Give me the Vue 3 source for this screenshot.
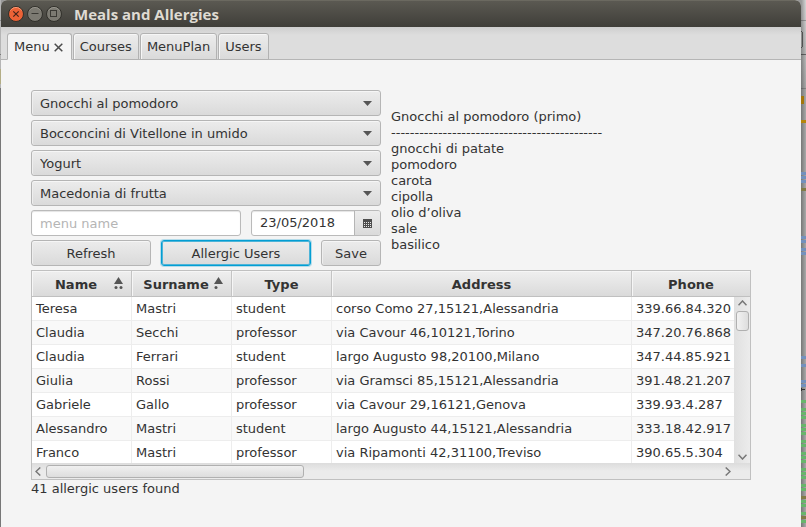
<script setup>
import { ref } from 'vue'

const tabs = ['Menu', 'Courses', 'MenuPlan', 'Users']
const activeTab = ref('Menu')

const courses = [
  { label: 'First course', value: 'Gnocchi al pomodoro' },
  { label: 'Main course', value: 'Bocconcini di Vitellone in umido' },
  { label: 'Dessert', value: 'Yogurt' },
  { label: 'Fruit', value: 'Macedonia di frutta' },
]

const menuName = ref('')
const menuDate = ref('23/05/2018')

const details = [
  'Gnocchi al pomodoro (primo)',
  '---------------------------------------------',
  'gnocchi di patate',
  'pomodoro',
  'carota',
  'cipolla',
  'olio d’oliva',
  'sale',
  'basilico',
]

const columns = [
  { key: 'name', title: 'Name', dots: 2 },
  { key: 'surname', title: 'Surname', dots: 1 },
  { key: 'type', title: 'Type', dots: 0 },
  { key: 'address', title: 'Address', dots: 0 },
  { key: 'phone', title: 'Phone', dots: 0 },
]

const users = [
  ['Teresa', 'Mastri', 'student', 'corso Como 27,15121,Alessandria', '339.66.84.320'],
  ['Claudia', 'Secchi', 'professor', 'via Cavour 46,10121,Torino', '347.20.76.868'],
  ['Claudia', 'Ferrari', 'student', 'largo Augusto 98,20100,Milano', '347.44.85.921'],
  ['Giulia', 'Rossi', 'professor', 'via Gramsci 85,15121,Alessandria', '391.48.21.207'],
  ['Gabriele', 'Gallo', 'professor', 'via Cavour 29,16121,Genova', '339.93.4.287'],
  ['Alessandro', 'Mastri', 'student', 'largo Augusto 44,15121,Alessandria', '333.18.42.917'],
  ['Franco', 'Mastri', 'professor', 'via Ripamonti 42,31100,Treviso', '390.65.5.304'],
]

// Marks of the editor overview ruler visible behind the window
const blue = '#7390bd'
const green = '#68b56b'
const olive = '#827b47'
const marks = [
  ...[172, 176, 180, 236, 240, 248, 252, 356, 364, 380, 384].map((y) => ({ y, fill: blue })),
  ...[400, 408, 412, 416, 424, 428, 432, 440, 444, 452, 456, 460, 468, 472, 476, 484, 488, 500, 504, 512, 520].map(
    (y) => ({ y, fill: green }),
  ),
  ...[188, 496, 516].map((y) => ({ y, fill: olive })),
]
</script>

<template>
  <div class="desktop">
    <svg class="edge" width="1" height="527" viewBox="0 0 1 527" aria-hidden="true">
      <rect width="1" height="88" fill="#b5b5b5" />
      <rect y="20" width="1" height="1" fill="#8c8c8c" />
      <rect y="54" width="1" height="1" fill="#777" />
      <rect y="69" width="1" height="15" fill="#b3ad85" />
      <rect y="88" width="1" height="439" fill="#777" />
    </svg>

    <main class="window">
      <header class="titlebar">
        <button class="wm" aria-label="Close">
          <svg width="18" height="18" viewBox="0 0 18 18">
            <circle cx="9" cy="9" r="7.5" fill="#ec6236" stroke="#31302b" />
            <path d="M3.5 5.5A6.5 6.5 0 0 1 14.5 5.5" fill="none" stroke="#f79b78" />
            <path d="M6.3 6.3l5.4 5.4M11.7 6.3l-5.4 5.4" stroke="#45241a" stroke-width="1.2" />
          </svg>
        </button>
        <button class="wm" aria-label="Minimize">
          <svg width="18" height="18" viewBox="0 0 18 18">
            <circle cx="9" cy="9" r="7.5" fill="#7c7a72" stroke="#31302b" />
            <path d="M3.5 5.5A6.5 6.5 0 0 1 14.5 5.5" fill="none" stroke="#96948c" />
            <path d="M5.5 8.5h7" stroke="#3a3934" />
          </svg>
        </button>
        <button class="wm" aria-label="Maximize">
          <svg width="18" height="18" viewBox="0 0 18 18">
            <circle cx="9" cy="9" r="7.5" fill="#7c7a72" stroke="#31302b" />
            <path d="M3.5 5.5A6.5 6.5 0 0 1 14.5 5.5" fill="none" stroke="#96948c" />
            <rect x="5.5" y="5.5" width="6" height="6" fill="none" stroke="#3a3934" />
          </svg>
        </button>
        <h1>Meals and Allergies</h1>
      </header>

      <nav class="tabs" role="tablist">
        <button
          v-for="tab in tabs"
          :key="tab"
          class="tab"
          :class="{ active: tab === activeTab }"
          role="tab"
          :aria-selected="tab === activeTab"
          @click="activeTab = tab"
        >
          {{ tab }}
          <svg v-if="tab === activeTab" width="9" height="9" viewBox="0 0 9 9" aria-hidden="true">
            <path d="M.7.7l7.6 7.6M8.3.7L.7 8.3" stroke="#4a4a4a" stroke-width="1.5" />
          </svg>
        </button>
      </nav>

      <section class="content">
        <div class="top">
          <form class="form" @submit.prevent>
            <div v-for="c in courses" :key="c.label" class="combo">
              <select :aria-label="c.label">
                <option>{{ c.value }}</option>
              </select>
              <svg class="arrow" width="9" height="5" viewBox="0 0 9 5" aria-hidden="true">
                <path d="M0 0h9L4.5 5z" fill="#555" />
              </svg>
            </div>
            <div class="row">
              <input v-model="menuName" class="field" type="text" placeholder="menu name" aria-label="Menu name" />
              <div class="date">
                <input v-model="menuDate" type="text" aria-label="Menu date" />
                <button type="button" aria-label="Pick a date">
                  <svg width="9" height="9" viewBox="0 0 9 9">
                    <rect width="9" height="9" fill="#4d4d4d" />
                    <g fill="#e8e8e8">
                      <template v-for="y in [3, 5, 7]" :key="y">
                        <rect v-for="x in [1, 3, 5, 7]" :key="x" :x="x" :y="y" width="1" height="1" />
                      </template>
                    </g>
                  </svg>
                </button>
              </div>
            </div>
            <div class="row">
              <button type="button" class="btn refresh">Refresh</button>
              <button type="button" class="btn allergic">Allergic Users</button>
              <button type="button" class="btn save">Save</button>
            </div>
          </form>
          <div class="details">
            <div v-for="line in details" :key="line">{{ line }}</div>
          </div>
        </div>

        <div class="grid">
          <div class="viewport">
            <table>
              <colgroup>
                <col v-for="c in columns" :key="c.key" :class="'col-' + c.key" />
              </colgroup>
              <thead>
                <tr>
                  <th v-for="c in columns" :key="c.key" scope="col">
                    <div class="head" :class="{ sorted: c.dots }">
                      <span>{{ c.title }}</span>
                      <svg v-if="c.dots" width="9" height="13" viewBox="0 0 9 13" aria-hidden="true">
                        <path d="M4.5 0L9 7H0z" fill="#555" />
                        <circle cx="2" cy="10.5" r="1.5" fill="#555" />
                        <circle v-if="c.dots > 1" cx="7" cy="10.5" r="1.5" fill="#555" />
                      </svg>
                    </div>
                  </th>
                </tr>
              </thead>
              <tbody>
                <tr v-for="(u, i) in users" :key="i">
                  <td v-for="(cell, j) in u" :key="j">{{ cell }}</td>
                </tr>
              </tbody>
            </table>
          </div>
          <div class="vbar" aria-hidden="true">
            <svg width="9" height="6" viewBox="0 0 9 6"><path d="M.5 5.3l4-4.3 4 4.3" /></svg>
            <div class="thumb"></div>
            <svg width="9" height="6" viewBox="0 0 9 6"><path d="M.5.7l4 4.3 4-4.3" /></svg>
          </div>
          <div class="hbar" aria-hidden="true">
            <svg width="6" height="9" viewBox="0 0 6 9"><path d="M5.3.5L1 4.5l4.3 4" /></svg>
            <div class="thumb"></div>
            <svg width="6" height="9" viewBox="0 0 6 9"><path d="M.7.5L5 4.5l-4.3 4" /></svg>
          </div>
        </div>
        <p class="status" role="status">41 allergic users found</p>
      </section>
    </main>

    <svg class="edge" width="5" height="527" viewBox="0 0 5 527" shape-rendering="crispEdges" aria-hidden="true">
      <defs>
        <linearGradient id="shade">
          <stop offset="0" stop-color="#000" stop-opacity=".3" />
          <stop offset="1" stop-color="#000" stop-opacity="0" />
        </linearGradient>
        <linearGradient id="fade" x2="0" y2="1">
          <stop offset="0" stop-color="#d6d6d6" />
          <stop offset="1" stop-color="#a8a8a8" />
        </linearGradient>
      </defs>
      <rect width="5" height="527" fill="#a9a9a9" />
      <rect width="5" height="88" fill="url(#fade)" />
      <rect y="20" width="5" height="1" fill="#999" />
      <path d="M0 31.5q1.5 0 1.5 2v12q0 2-1.5 2" fill="none" stroke="#666" />
      <rect y="54" width="5" height="1" fill="#666" />
      <rect y="88" width="5" height="1" fill="#888" />
      <rect width="5" height="527" fill="url(#shade)" />
      <rect y="96" width="3" height="8" fill="#a3750b" />
      <rect y="120" width="5" height="3" fill="#b5850b" />
      <rect v-for="m in marks" :key="m.y" :y="m.y" width="5" height="3" :fill="m.fill" />
      <path d="M0 388h1v1h3v1H1v1H0z" fill="#333" />
    </svg>
  </div>
</template>

<style>
body {
  background: #999;
}
</style>

<style scoped>
* {
  box-sizing: border-box;
}
.desktop {
  display: grid;
  grid-template-columns: 1px minmax(0, 1fr) 5px;
  min-height: 100vh;
  background: #999;
  font: 13px/16px "DejaVu Sans", sans-serif;
  color: #333;
}
.edge {
  display: block;
}
button,
input,
select {
  font: inherit;
  color: inherit;
  margin: 0;
  outline: none;
}
.window {
  background: #f4f4f4;
  border-radius: 6px 6px 0 0;
  overflow: hidden;
}
.titlebar {
  display: flex;
  align-items: center;
  gap: 1px;
  height: 27px;
  padding: 0 6px;
  background: linear-gradient(#5b5952, #3f3e39);
  border-top: 1px solid #6b6960;
}
.wm {
  display: block;
  width: 18px;
  height: 18px;
  padding: 0;
  border: 0;
  background: none;
}
.wm svg {
  display: block;
}
h1 {
  margin: 0 0 0 10px;
  font: bold 15px/20px "Open Sans", "Noto Sans", sans-serif;
  color: #dfdbd2;
}
.tabs {
  display: flex;
  gap: 1px;
  height: 33px;
  padding: 6px 6px 0;
  background: linear-gradient(#cecece, #dddddd 8px);
  box-shadow: inset 0 -1px #b5b5b5;
}
.tab {
  display: flex;
  align-items: center;
  gap: 4px;
  height: 27px;
  padding: 1px 6px 0;
  border: 1px solid #b2b2b2;
  border-radius: 3px 3px 0 0;
  background: linear-gradient(#ececec, #dadada);
  box-shadow: inset 1px 1px #f6f6f6;
}
.tab.active {
  padding-right: 8px;
  background: #f4f4f4;
  border-bottom-color: #f4f4f4;
  box-shadow: none;
}
.content {
  padding: 30px 50px 30px 30px;
}
.top {
  display: flex;
  gap: 10px;
}
.form {
  display: grid;
  gap: 4px;
  width: 350px;
}
.combo {
  display: grid;
  align-items: center;
}
.combo > * {
  grid-area: 1 / 1;
}
select,
.btn {
  height: 26px;
  border: 1px solid #b5b5b5;
  border-radius: 3px;
  background: linear-gradient(#ececec, #dadada);
  box-shadow: inset 0 1px #f6f6f6, inset 1px 0 #eee;
}
select {
  appearance: none;
  width: 100%;
  padding: 2px 30px 0 8px;
}
.arrow {
  justify-self: end;
  margin-right: 9px;
  pointer-events: none;
}
.row {
  display: flex;
  gap: 10px;
}
.field,
.date {
  height: 26px;
  border: 1px solid #bababa;
  border-radius: 3px;
  background: #fff;
  box-shadow: inset 0 1px 1px #e4e4e4;
}
.field {
  flex: 1;
  min-width: 0;
  padding: 0 8px;
}
.field::placeholder {
  color: #b5b5b5;
  opacity: 1;
}
.date {
  display: flex;
  width: 130px;
}
.date input {
  flex: 1;
  min-width: 0;
  padding: 0 8px;
  border: 0;
  background: none;
}
.date button {
  display: grid;
  place-items: center;
  width: 26px;
  padding: 1px 0 0;
  border: 0;
  border-left: 1px solid #b5b5b5;
  border-radius: 0 2px 2px 0;
  background: linear-gradient(#ececec, #dadada);
}
.btn {
  padding: 2px 0 0;
}
.refresh {
  width: 120px;
}
.allergic {
  width: 150px;
  border-color: #039ed3;
  box-shadow: 0 0 0 1px #b5dcea, inset 0 0 0 1px #4db4d8;
}
.save {
  width: 60px;
}
.details {
  padding-top: 19px;
  white-space: nowrap;
}
.grid {
  display: grid;
  grid-template: 26px 166px 16px / minmax(0, 1fr) 16px;
  margin-top: 4px;
  border: 1px solid #c0c0c0;
  background: #fff;
}
.viewport {
  grid-area: 1 / 1 / 3 / 3;
  overflow: hidden;
}
table {
  width: 100%;
  table-layout: fixed;
  border-collapse: separate;
  border-spacing: 0;
}
.col-name,
.col-surname,
.col-type {
  width: 100px;
}
.col-address {
  width: 300px;
}
th {
  height: 26px;
  padding: 0;
  border-right: 1px solid #c4c4c4;
  border-bottom: 1px solid #c0c0c0;
  background: linear-gradient(#efefef, #dadada);
  box-shadow: inset 1px 1px #f6f6f6;
}
.head {
  display: flex;
  align-items: center;
  height: 25px;
}
.head span {
  flex: 1;
  padding-top: 2px;
}
.sorted {
  padding: 0 8px 0 6px;
}
.sorted svg {
  margin-bottom: 1px;
}
td {
  height: 24px;
  padding: 0 4px;
  border-right: 1px solid #ededed;
  border-bottom: 1px solid #ededed;
  white-space: nowrap;
  overflow: hidden;
}
th:last-child,
td:last-child {
  border-right: 0;
}
tbody tr:nth-child(even) {
  background: #f9f9f9;
}
.vbar,
.hbar {
  position: relative;
  display: flex;
  align-items: center;
}
.vbar {
  grid-area: 2 / 2;
  flex-direction: column;
  padding: 3px 0;
  background: linear-gradient(90deg, #e0e0e0, #ececec);
}
.hbar {
  grid-area: 3 / 1 / 4 / 3;
  padding: 0 19px 0 3px;
  background: linear-gradient(#dcdcdc, #ebebeb 8px);
}
.vbar svg,
.hbar svg {
  flex: none;
  fill: none;
  stroke: #777;
  stroke-width: 1.5;
}
.vbar svg:last-child {
  margin-top: auto;
}
.hbar svg:last-child {
  margin-left: auto;
}
.thumb {
  flex: none;
  border: 1px solid #b0b0b0;
  border-radius: 3px;
}
.vbar .thumb {
  width: 13px;
  height: 20px;
  margin-top: 5px;
  background: linear-gradient(90deg, #f2f2f2, #dddddd);
}
.hbar .thumb {
  width: 258px;
  height: 13px;
  margin-left: 5px;
  background: linear-gradient(#f0f0f0, #dddddd);
}
.status {
  margin: 1px 0 0;
}
</style>
